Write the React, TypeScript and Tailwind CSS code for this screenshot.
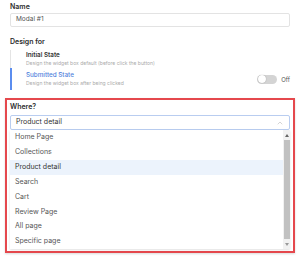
import { ChevronUp } from 'lucide-react'

const pages = ['Home Page', 'Collections', 'Product detail', 'Search', 'Cart', 'Review Page', 'All page', 'Specific page']

export default function App() {
  return (
    <div className="w-[300px] h-[258px] bg-white overflow-hidden text-[#333]" style={{ fontFamily: 'Inter, "Noto Sans", sans-serif' }}>
      <div className="px-[10px] pt-[2px]">
        <p className="text-[7px] leading-[10px] font-semibold text-[#2d2d2d]">Name</p>
        <div className="mt-[1px] h-[14px] w-[280px] border border-[#e3e3e3] rounded-[2px] flex items-center px-[5px]">
          <span className="text-[6.5px] text-[#555]">Modal #1</span>
        </div>
        <p className="mt-[10px] text-[7px] leading-[10px] font-semibold text-[#2d2d2d]">Design for</p>
        <div className="mt-[3px] flex flex-col">
          <div className="flex h-[18px] border-l border-[#e4e4e4] pl-[15px] flex-col justify-center">
            <p className="text-[6.3px] leading-[9px] font-semibold text-[#333]">Initial State</p>
            <p className="text-[5px] leading-[7px] text-[#aaa]">Design the widget box default (before click the button)</p>
          </div>
          <div className="flex h-[22px] items-center border-l-2 border-[#5b8def] pl-[14px]">
            <div className="flex-1">
              <p className="text-[6.3px] leading-[9px] font-medium text-[#4f7fdc]">Submitted State</p>
              <p className="text-[5px] leading-[7px] text-[#aaa]">Design the widget box after being clicked</p>
            </div>
            <div className="flex items-center gap-[4px]">
              <div className="w-[20px] h-[9px] rounded-full bg-[#d4d4d4] flex items-center px-[1px]">
                <div className="w-[8px] h-[8px] rounded-full bg-white shadow-[0_0_1px_rgba(0,0,0,0.4)]" />
              </div>
              <span className="text-[6px] text-[#555]">Off</span>
            </div>
          </div>
        </div>
      </div>

      <div className="ml-[5px] mt-[8px] w-[290px] h-[155px] border-2 border-[#e5484d] shadow-[0_1px_2px_rgba(0,0,0,0.15)] px-[3px] pt-[2px]">
        <p className="text-[7px] leading-[10px] font-semibold text-[#2d2d2d]">Where?</p>
        <div className="mt-[3px] h-[15px] w-[280px] border border-[#b9cdf0] rounded-[2px] flex items-center justify-between px-[5px]">
          <span className="text-[7px] text-[#333]">Product detail</span>
          <ChevronUp className="w-[8px] h-[8px] text-[#aaa]" strokeWidth={1.5} />
        </div>
        <div className="flex w-[280px] h-[119px] shadow-[0_1px_2px_rgba(0,0,0,0.12)]">
          <div className="flex-1 flex flex-col">
            {pages.map((p, i) => (
              <div key={i} className={`h-[15px] flex items-center px-[5px] text-[7px] ${p === 'Product detail' ? 'bg-[#ecf3fc] text-[#333]' : 'text-[#555]'}`}>
                {p}
              </div>
            ))}
          </div>
          <div className="w-[7px] bg-[#f1f1f1] flex flex-col items-center">
            <div className="h-[10px] flex items-center justify-center">
              <div className="w-0 h-0 border-l-[2px] border-r-[2px] border-b-[3px] border-l-transparent border-r-transparent border-b-[#666]" />
            </div>
            <div className="w-[6px] flex-1 bg-[#c1c1c1]" />
            <div className="h-[10px] flex items-center justify-center">
              <div className="w-0 h-0 border-l-[2px] border-r-[2px] border-t-[3px] border-l-transparent border-r-transparent border-t-[#999]" />
            </div>
          </div>
        </div>
      </div>
    </div>
  )
}
